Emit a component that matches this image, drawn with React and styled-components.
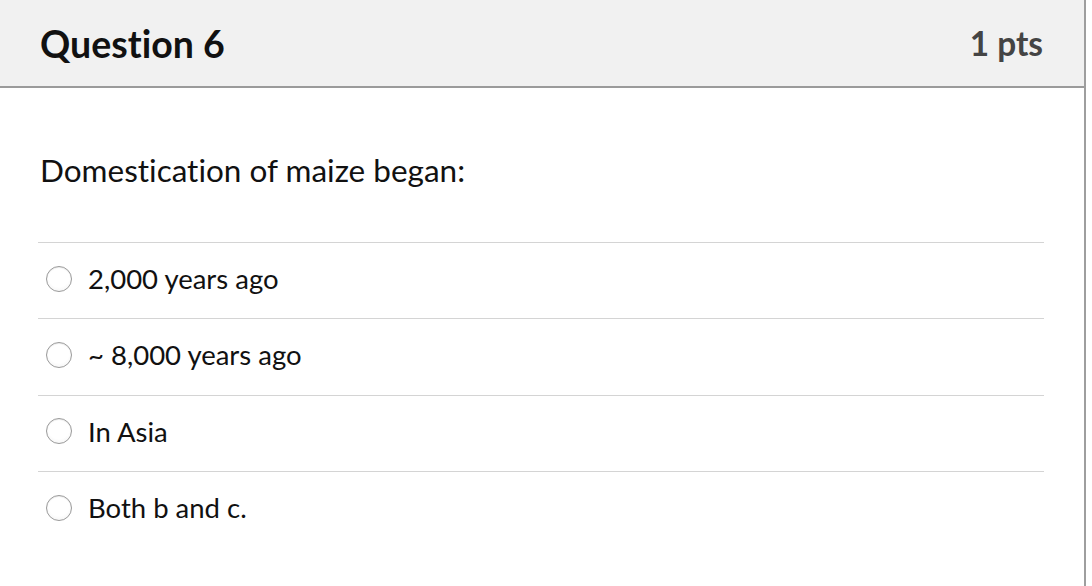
import React from 'react'
import styled, { createGlobalStyle } from 'styled-components'

const GlobalStyle = createGlobalStyle`
    html, body {
        margin: 0;
        padding: 0;
        background: #fff;
    }
    body {
        font-family: Lato, "Open Sans", sans-serif;
        font-variant-ligatures: none;
        color: #111;
    }
`

const answers = ['2,000 years ago', '~ 8,000 years ago', 'In Asia', 'Both b and c.']

export default function App() {
    return (
        <>
            <GlobalStyle />
            <Card>
                <Header>
                    <Title>Question 6</Title>
                    <Points>1 pts</Points>
                </Header>
                <Body>
                    <Prompt>Domestication of maize began:</Prompt>
                    <Answers>
                        {answers.map((a, i) => (
                            <Answer key={i}>
                                <Radio type="radio" name="q6" />
                                <AnswerText>{a}</AnswerText>
                            </Answer>
                        ))}
                    </Answers>
                </Body>
            </Card>
        </>
    )
}

const Card = styled.div`
    width: 1084px;
    height: 586px;
    border-right: 2px solid #9e9e9e;
    box-sizing: content-box;
`

const Header = styled.div`
    height: 86px;
    background: #f1f1f1;
    border-bottom: 2px solid #9b9b9b;
    display: flex;
    align-items: center;
    justify-content: space-between;
    padding: 0 41px 0 40px;
`

const Title = styled.h2`
    margin: 0;
    font-size: 37.5px;
    font-weight: 700;
    color: #111;
`

const Points = styled.div`
    font-size: 33.4px;
    font-weight: 700;
    color: #444;
`

const Body = styled.div`
    padding: 0 40px 0 38px;
`

const Prompt = styled.p`
    margin: 0;
    padding: 64px 0 0 2px;
    height: 90px;
    font-size: 31.5px;
    line-height: 36px;
    color: #111;
`

const Answers = styled.div`
    display: flex;
    flex-direction: column;
`

const Answer = styled.label`
    display: flex;
    align-items: center;
    height: 75.33px;
    border-top: 1px solid #d4d4d4;
`

const Radio = styled.input`
    appearance: none;
    margin: -4px 16px 0 8px;
    width: 26px;
    height: 26px;
    border-radius: 50%;
    border: 1px solid #9a9a9a;
    background: radial-gradient(circle at 50% 40%, #ffffff 55%, #eeeeee 100%);
    box-shadow: inset 0 1px 1px rgba(0, 0, 0, 0.08);
`

const AnswerText = styled.span`
    font-size: 27.5px;
    margin-top: -4px;
    color: #111;
`
